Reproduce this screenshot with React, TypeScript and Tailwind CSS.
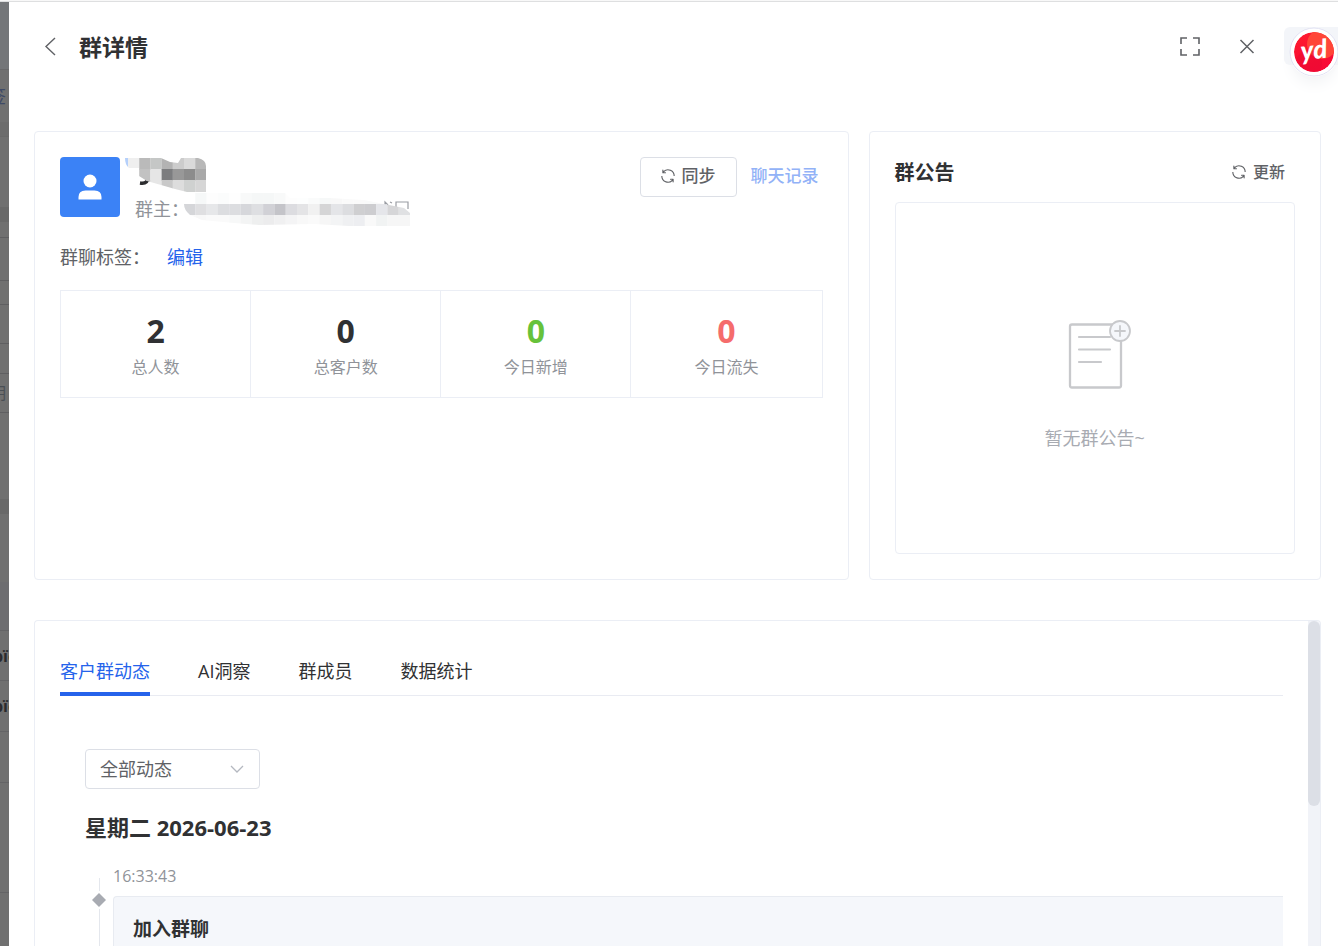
import React, { useState } from 'react';

const backdropRows = [
  { className: 'h-[68px] justify-end border-b border-[#69696b] bg-[#747679]', text: '' },
  { className: 'h-[53px] justify-end border-b border-[#6c6c6c] pr-[3px] text-lg text-[#3f4a66]', text: '签' },
  { className: 'h-[14px] border-b border-[#696969] bg-[#6c6c6c]', text: '' },
  { className: 'h-[70px]', text: '' },
  { className: 'h-[15px] bg-[#696969]', text: '' },
  { className: 'h-[16px] border-b border-[#5f5f61]', text: '' },
  { className: 'h-[43px] border-b border-[#5f5f61]', text: '' },
  { className: 'h-[24px] border-b border-[#5f5f61]', text: '' },
  { className: 'h-[39px] border-b border-[#5f5f61]', text: '' },
  { className: 'h-[30px] border-b border-[#5f5f61]', text: '' },
  { className: 'h-[39px] justify-end border-b border-[#5f5f61] pr-[3px] text-base text-[#4a4f55]', text: '明' },
  { className: 'h-[86px]', text: '' },
  { className: 'h-[15px] bg-[#696969]', text: '' },
  { className: 'h-[68px]', text: '' },
  { className: 'h-[49px] border-b border-[#646466] bg-[#6d6d70]', text: '' },
  { className: 'h-[50px] justify-center border-b border-[#646466] text-base font-bold text-[#2a2a2c]', text: 'pïc' },
  { className: 'h-[51px] justify-center border-b border-[#646466] text-base font-bold text-[#2a2a2c]', text: 'pïc' },
  { className: 'h-[51px] border-b border-[#646466]', text: '' },
  { className: 'h-[110px] border-b border-[#646466]', text: '' },
];

const stats = [
  { label: '总人数', value: 2, color: 'text-[#303133]' },
  { label: '总客户数', value: 0, color: 'text-[#303133]' },
  { label: '今日新增', value: 0, color: 'text-[#67c23a]' },
  { label: '今日流失', value: 0, color: 'text-[#f56c6c]' },
];

const tabs = ['客户群动态', 'AI洞察', '群成员', '数据统计'];

const nameCells = [
  ['#efefef', '#bababa', '#c5c7c6', '#b3b3b3', '#cccccc', '#dadada', '#b8b8b8'],
  ['#efefef', '#c2c2c2', '#e6e6e6', '#7c7d7f', '#989898', '#8c8c8c', '#a9a9a9'],
  ['#efefef', '#c2c2c2', '#e6e6e6', '#c9c9c9', '#dddddd', '#cfd1d0', '#d6d6d6'],
];

const ownerCells = [
  ['#ffffff', '#f6f8f8', '#fdfdfd', '#fbfcfc', '#fefefe', '#f8f9f9', '#f5f7f7', '#f5f7f7', '#f8f9f9', '#fdfdfd', '#fdfefe', '#fafbfb', '#f6f8f8', '#f8f8f8', '#fafafa', '#fafafa', '#f9fafa', '#f9f9f9', '#f7f7f7', '#f5f5f5'],
  ['#d5d6d9', '#dfdfe1', '#e6e7e9', '#dcdde0', '#dcdde0', '#d6d7db', '#dedfe2', '#d1d1d6', '#c4c4c9', '#dcdce0', '#e4e4e6', '#f1f1f1', '#d5d5d6', '#e4e5e8', '#dcdde0', '#cfcfd1', '#cdcdd0', '#e5e6ea', '#d6d6d8', '#e0e1e3'],
  ['#fafafa', '#f8f8f8', '#fafafa', '#fafafa', '#f7f8f8', '#f3f4f4', '#eeefef', '#ececed', '#f0f0f1', '#f4f4f5', '#f8f8f8', '#fafafa', '#f6f6f6', '#f3f4f5', '#eff0f2', '#edeef1', '#f9f9f9', '#f1f3f3', '#f6f6f6', '#f6f6f6'],
];

function RefreshIcon() {
  return (
    <svg viewBox="0 0 1024 1024" className="size-[18px] shrink-0" fill="currentColor" aria-hidden="true">
      <path d="M771.776 794.88A384 384 0 0 1 128 512h64a320 320 0 0 0 555.712 216.448H654.72a32 32 0 1 1 0-64h149.056a32 32 0 0 1 32 32v148.928a32 32 0 1 1-64 0v-50.56zM276.288 295.616h92.992a32 32 0 0 1 0 64H220.16a32 32 0 0 1-32-32V178.56a32 32 0 0 1 64 0v50.56A384 384 0 0 1 896.128 512h-64a320 320 0 0 0-555.776-216.384z" />
    </svg>
  );
}

function Backdrop() {
  return (
    <div className="w-[9px] shrink-0 overflow-hidden bg-[#707070]" aria-hidden="true">
      {backdropRows.map((row, i) => (
        <div key={i} className={`flex items-center overflow-hidden ${row.className}`}>
          {row.text}
        </div>
      ))}
    </div>
  );
}

function MaskedName() {
  return (
    <svg viewBox="0 0 82 36" className="h-[36px] w-[82px]" aria-hidden="true">
      <clipPath id="name-mask">
        <path d="M3 1H36L45 5 53 6 56 1H73Q81 3 81 9V35H62L50 32 36 28 22 24 14 19V11H4Q0 8 0 1Z" />
      </clipPath>
      <path d="M15 26C21 27 24 24 22 19" fill="none" stroke="#2b2c2e" strokeWidth="3.500" />
      <g clipPath="url(#name-mask)">
        <rect x="0" y="0" width="3" height="13" fill="#b5d0fb" />
        {nameCells.map((row, y) =>
          row.map((fill, x) => (
            <rect key={`${x}-${y}`} x={3 + x * 11.2} y={1 + y * 11} width="11.3" height="12" fill={fill} />
          ))
        )}
      </g>
    </svg>
  );
}

function MaskedOwner() {
  return (
    <svg viewBox="0 0 228 34" className="h-[34px] w-[228px]" aria-hidden="true">
      <path d="M201 13V9L204 12M206 9L208 10M212 14V9H224V16" fill="none" stroke="#9a9da3" strokeWidth="1.200" />
      <clipPath id="owner-mask">
        <path d="M0 11H11V0H101L106 5H145L180 7 205 12 220 15 226 20V33H165L130 31 75 32 50 30 18 27 6 22Q0 17 0 11Z" />
      </clipPath>
      <g clipPath="url(#owner-mask)">
        {ownerCells.map((row, y) =>
          row.map((fill, x) => (
            <rect key={`${x}-${y}`} x={x * 11.3} y={y * 11} width="11.4" height="11" fill={fill} />
          ))
        )}
      </g>
    </svg>
  );
}

function Header() {
  return (
    <header className="flex h-[90px] shrink-0 items-center pr-[81px] pl-8 text-[#606266]">
      <button type="button" aria-label="返回" className="mr-[18px] p-0">
        <svg viewBox="0 0 20 20" className="size-5" fill="none" stroke="currentColor" strokeWidth="1.4">
          <path d="M14 1L5 9.500L14 18" />
        </svg>
      </button>
      <h1 className="flex-1 text-[23px] leading-8 font-bold text-[#303133]">群详情</h1>
      <button type="button" aria-label="全屏" className="mr-[37px]">
        <svg viewBox="0 0 20 20" className="size-5" fill="none" stroke="currentColor" strokeWidth="1.600">
          <path d="M1 7V1H7M13 1H19V7M19 12V18H13M7 18H1V12" />
        </svg>
      </button>
      <button type="button" aria-label="关闭">
        <svg viewBox="0 0 20 20" className="size-5" fill="none" stroke="currentColor" strokeWidth="1.5">
          <path d="M3.500 3L16.500 16M16.500 3L3.500 16" />
        </svg>
      </button>
    </header>
  );
}

function FloatingLogo() {
  return (
    <button type="button" aria-label="yd" className="absolute top-[25px] right-0">
      <span className="block h-[38px] w-[54px] rounded-l-md bg-[#f3f5f9]" />
      <svg viewBox="0 0 50 50" className="absolute top-0 -right-px size-[50px] rounded-full shadow-lg shadow-gray-100">
        <defs>
          <linearGradient id="logo-red" x1="0" y1="0" x2="0.3" y2="1">
            <stop offset="0" stopColor="#ff1c2e" />
            <stop offset="1" stopColor="#f80a36" />
          </linearGradient>
          <clipPath id="logo-disc">
            <circle cx="25" cy="25" r="20" />
          </clipPath>
        </defs>
        <circle cx="25" cy="25" r="24" fill="#ffffff" stroke="#e2e2f3" />
        <g clipPath="url(#logo-disc)">
          <circle cx="25" cy="25" r="20" fill="url(#logo-red)" />
          <circle cx="33" cy="17" r="15" fill="#ff4638" />
          <circle cx="20" cy="36" r="13" fill="#e30a32" fillOpacity="0.4" />
        </g>
        <text x="25" y="32" textAnchor="middle" transform="rotate(-6 25 25)" fill="#ffffff" fontFamily="Lato, sans-serif" fontSize="26" fontWeight="900" fontStyle="italic">
          yd
        </text>
      </svg>
    </button>
  );
}

function GroupCard() {
  return (
    <section className="min-w-0 rounded-[4px] border border-[#ebeef5] p-[25px]">
      <div className="flex h-[60px] items-start">
        <div className="size-[60px] shrink-0 rounded-[4px] bg-[#3b82f6]">
          <svg viewBox="0 0 60 60" className="size-full" fill="#ffffff" aria-hidden="true">
            <circle cx="30" cy="24" r="6.500" />
            <path d="M18.500 42.500V40Q18.500 33.500 25.500 33.500H34.500Q41.500 33.500 41.500 40V42.500Z" />
          </svg>
        </div>
        <div className="ml-[5px] min-w-0 flex-1">
          <MaskedName />
          <div className="flex h-[34px] pl-[10px] text-lg leading-8 text-[#909399]">
            <span className="w-[49px] whitespace-nowrap">群主：</span>
            <MaskedOwner />
          </div>
        </div>
        <button type="button" className="flex h-10 items-center gap-[5px] rounded-[4px] border border-[#dcdfe6] pr-5 pl-[18px] pb-[2px] text-[17px] font-medium text-[#606266]">
          <RefreshIcon />
          同步
        </button>
        <button type="button" className="ml-[10px] h-[38px] px-1 text-[17px] font-medium text-[#92b2f7]">
          聊天记录
        </button>
      </div>
      <div className="mt-7 flex h-6 items-center text-lg leading-6 text-[#606266]">
        <span>群聊标签：</span>
        <button type="button" className="ml-[17px] text-[#2563eb]">编辑</button>
      </div>
      <div className="mt-[21px] grid grid-cols-4 border border-[#ebeef5]">
        {stats.map((stat) => (
          <div key={stat.label} className="border-r border-[#ebeef5] pt-[22px] pb-[18px] text-center last:border-r-0">
            <div className={`text-[32px] leading-9 font-bold ${stat.color}`}>{stat.value}</div>
            <div className="mt-[6px] text-base leading-6 text-[#909399]">{stat.label}</div>
          </div>
        ))}
      </div>
    </section>
  );
}

function NoticeCard() {
  return (
    <section className="flex min-w-0 flex-col rounded-[4px] border border-[#ebeef5] p-[25px]">
      <div className="mb-[13px] flex h-8 items-center justify-between">
        <h2 className="text-xl leading-8 font-bold text-[#303133]">群公告</h2>
        <button type="button" className="flex items-center gap-[5px] pr-[10px] pb-[2px] text-base font-medium text-[#606266]">
          <RefreshIcon />
          更新
        </button>
      </div>
      <div className="flex flex-1 flex-col items-center rounded-[4px] border border-[#ebeef5] pt-[115px]">
        <svg viewBox="0 0 76 76" className="size-[76px]" fill="none" stroke="#c8c9cc" strokeLinecap="round" aria-hidden="true">
          <rect x="13" y="6.500" width="51" height="63" rx="2" strokeWidth="2.300" />
          <path d="M22 19H53M22 31.500H53M22 44H44" strokeWidth="2.200" />
          <circle cx="63" cy="13" r="10" fill="#f5f7fb" strokeWidth="1.800" />
          <path d="M58 13H68M63 8V18" strokeWidth="1.800" />
        </svg>
        <p className="mt-8 text-lg leading-6 text-[#a8abb2]">暂无群公告~</p>
      </div>
    </section>
  );
}

function ActivityPanel() {
  const [activeTab, setActiveTab] = useState(tabs[0]);

  return (
    <section className="mt-10 flex min-h-0 flex-1 overflow-hidden rounded-t-[4px] border border-b-0 border-[#ebeef5]">
      <div className="min-w-0 flex-1 overflow-hidden p-[25px] pb-0">
        <nav className="flex gap-12 border-b border-[#e9ebf2]">
          {tabs.map((tab) => (
            <button
              key={tab}
              type="button"
              onClick={() => setActiveTab(tab)}
              className={`-mb-px h-[50px] border-b-4 pt-1 text-lg leading-6 ${
                activeTab === tab ? 'border-[#2563eb] text-[#2563eb]' : 'border-transparent text-[#303133]'
              }`}
            >
              {tab}
            </button>
          ))}
        </nav>
        <div className="pt-[53px] pl-[25px]">
          <div className="relative w-[175px]">
            <select aria-label="动态类型" className="h-10 w-full appearance-none rounded-[4px] border border-[#dcdfe6] bg-white px-[14px] text-lg leading-6 text-[#606266]">
              <option>全部动态</option>
            </select>
            <svg viewBox="0 0 16 16" className="pointer-events-none absolute top-3 right-[15px] size-4" fill="none" stroke="#b4b8c0" strokeWidth="1.300">
              <path d="M2 5L8 11L14 5" />
            </svg>
          </div>
          <h3 className="mt-[22px] text-[22px] leading-8 font-bold text-[#303133]">星期二 2026-06-23</h3>
          <div className="mt-[21px] flex">
            <div className="flex w-7 shrink-0 flex-col items-center pt-[14px]">
              <span className="h-[13px] w-px bg-[#e4e7ed]" />
              <svg viewBox="0 0 14 14" className="my-[2px] size-[14px] shrink-0" fill="#a8abb2" aria-hidden="true">
                <path d="M7 0L14 7L7 14L0 7Z" />
              </svg>
              <span className="w-px flex-1 bg-[#e4e7ed]" />
            </div>
            <div className="min-w-0 flex-1">
              <time className="mb-2 block h-6 text-base leading-6 text-[#909399]">16:33:43</time>
              <div className="h-40 rounded-l-[4px] border border-r-0 border-[#e8ebf1] bg-[#f5f7fb] px-[19px] pt-4">
                <h4 className="text-[19px] leading-8 font-bold text-[#303133]">加入群聊</h4>
              </div>
            </div>
          </div>
        </div>
      </div>
      <div className="w-3 shrink-0 bg-[#f1f3f8]">
        <div className="h-[185px] rounded-full bg-[#dcdfe6]" />
      </div>
    </section>
  );
}

export default function App() {
  return (
    <div className="flex h-screen flex-col overflow-hidden bg-white font-['Open_Sans','Noto_Sans_CJK_SC',sans-serif]">
      <div className="h-[2px] shrink-0 border-b border-[#dedfe0] bg-[#f8f8f8]" />
      <div className="flex min-h-0 flex-1">
        <Backdrop />
        <div className="relative flex min-w-0 flex-1 flex-col">
          <Header />
          <FloatingLogo />
          <main className="flex min-h-0 flex-1 flex-col pt-[39px] pr-[17px] pl-[25px]">
            <div className="grid h-[449px] shrink-0 grid-cols-[9fr_5fr] gap-5">
              <GroupCard />
              <NoticeCard />
            </div>
            <ActivityPanel />
          </main>
        </div>
      </div>
    </div>
  );
}
